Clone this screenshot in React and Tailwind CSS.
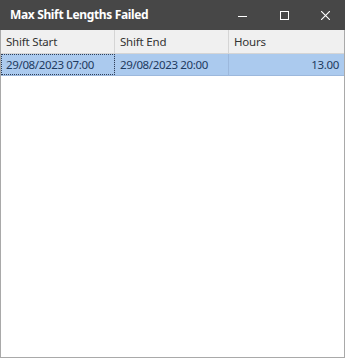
import React from 'react';

const ROWS = [{ start: '29/08/2023 07:00', end: '29/08/2023 20:00', hours: '13.00' }];

export default function App() {
  return (
    <div className="w-[345px] h-[358px] flex flex-col bg-white border border-[#a9a9a9] border-t-0" style={{ fontFamily: '"Noto Sans", "Open Sans", sans-serif' }}>
      {/* Title bar */}
      <div className="h-[30px] bg-[#474747] flex items-center shrink-0 -mx-px">
        <div className="pl-[10px] flex-1 text-white text-[12px] font-bold tracking-[-0.35px]">Max Shift Lengths Failed</div>
        <div className="w-[42px] h-full flex items-center justify-center">
          <svg width="9" height="9" viewBox="0 0 9 9"><path d="M0 5.5h9" stroke="white" strokeWidth="1" /></svg>
        </div>
        <div className="w-[42px] h-full flex items-center justify-center">
          <svg width="9" height="9" viewBox="0 0 9 9"><rect x="0.5" y="0.5" width="8" height="8" fill="none" stroke="white" strokeWidth="1" /></svg>
        </div>
        <div className="w-[40px] h-full flex items-center justify-center">
          <svg width="9" height="9" viewBox="0 0 9 9"><path d="M0 0L9 9M9 0L0 9" stroke="white" strokeWidth="1.1" /></svg>
        </div>
      </div>

      {/* Grid header */}
      <div className="grid grid-cols-[114px_114px_1fr] h-[24px] bg-[#f0f0f0] border-b border-[#d5d5d5] text-[11.5px] tracking-[-0.2px] text-[#333]">
        <div className="pl-[5px] flex items-center border-r border-[#d5d5d5]">Shift Start</div>
        <div className="pl-[5px] flex items-center border-r border-[#d5d5d5]">Shift End</div>
        <div className="pl-[5px] flex items-center">Hours</div>
      </div>

      {/* Rows */}
      {ROWS.map((r, i) => (
        <div key={i} className="grid grid-cols-[114px_114px_1fr] h-[22px] bg-[#abcaee] border-b border-[#9cb8dc] text-[11.5px] tracking-[-0.35px] text-[#1e3a5f]">
          <div className="pl-[5px] flex items-center border-r border-[#9cb8dc] outline outline-1 outline-dotted outline-[#30405a] -outline-offset-1">{r.start}</div>
          <div className="pl-[5px] flex items-center border-r border-[#9cb8dc]">{r.end}</div>
          <div className="pr-[5px] flex items-center justify-end">{r.hours}</div>
        </div>
      ))}
      <div className="flex-1" />
    </div>
  );
}
